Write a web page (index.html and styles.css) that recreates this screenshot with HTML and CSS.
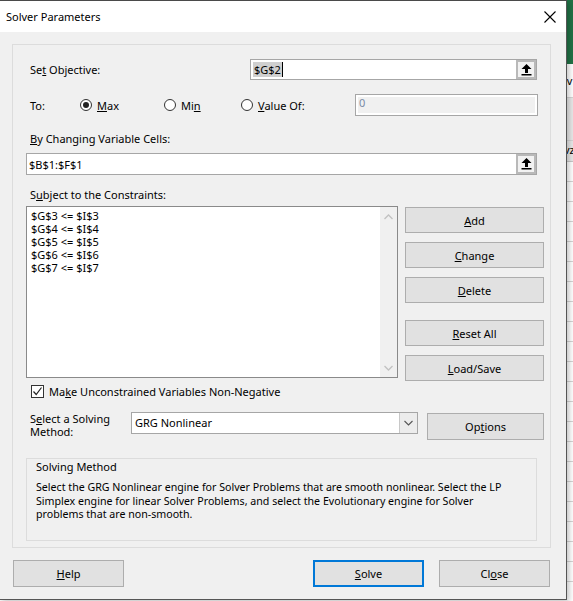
FILE: index.html
```html
<!DOCTYPE html>
<html lang="en">
<head>
    <meta charset="UTF-8">
    <title>Solver Parameters</title>
    <link rel="stylesheet" href="styles.css">
</head>
<body>
    <div class="screen">
        <div class="window">
            <div class="titlebar">
                <span class="title">Solver Parameters</span>
                <svg class="close" width="12" height="12" viewBox="0 0 12 12">
                    <path d="M0.5 0.5 L11.5 11.5 M11.5 0.5 L0.5 11.5" stroke="#000" stroke-width="1.1" fill="none"/>
                </svg>
            </div>
            <div class="client">
                <div class="panel">
                    <div class="row row-objective">
                        <span class="lbl lbl-objective">Se<u>t</u> Objective:</span>
                        <div class="refedit ref-objective">
                            <span class="ref-text"><span class="sel">$G$2</span><span class="caret"></span></span>
                            <span class="ref-btn">
                                <svg width="11" height="12" viewBox="0 0 11 12"><path d="M5.5 0 L10.5 5 L7 5 L7 9 L4 9 L4 5 L0.5 5 Z M0.5 10 H10.5 V11.5 H0.5 Z" fill="#000"/></svg>
                            </span>
                        </div>
                    </div>
                    <div class="row row-to">
                        <span class="lbl lbl-to">To:</span>
                        <label class="radio r-max"><span class="dot checked"></span><span><u>M</u>ax</span></label>
                        <label class="radio r-min"><span class="dot"></span><span>Mi<u>n</u></span></label>
                        <label class="radio r-value"><span class="dot"></span><span><u>V</u>alue Of:</span></label>
                        <div class="value-box"><span>0</span></div>
                    </div>
                    <div class="lbl lbl-block lbl-vars"><u>B</u>y Changing Variable Cells:</div>
                    <div class="refedit ref-vars">
                        <span class="ref-text">$B$1:$F$1</span>
                        <span class="ref-btn">
                            <svg width="11" height="12" viewBox="0 0 11 12"><path d="M5.5 0 L10.5 5 L7 5 L7 9 L4 9 L4 5 L0.5 5 Z M0.5 10 H10.5 V11.5 H0.5 Z" fill="#000"/></svg>
                        </span>
                    </div>
                    <div class="lbl lbl-block lbl-subject">S<u>u</u>bject to the Constraints:</div>
                    <div class="constraints">
                        <div class="listbox">
                            <ul class="items">
                                <li>$G$3 &lt;= $I$3</li>
                                <li>$G$4 &lt;= $I$4</li>
                                <li>$G$5 &lt;= $I$5</li>
                                <li>$G$6 &lt;= $I$6</li>
                                <li>$G$7 &lt;= $I$7</li>
                            </ul>
                            <div class="vscroll">
                                <svg width="9" height="6" viewBox="0 0 9 6"><path d="M0.5 5 L4.5 1 L8.5 5" stroke="#c2c2c2" stroke-width="1.3" fill="none"/></svg>
                                <svg width="9" height="6" viewBox="0 0 9 6"><path d="M0.5 1 L4.5 5 L8.5 1" stroke="#c2c2c2" stroke-width="1.3" fill="none"/></svg>
                            </div>
                        </div>
                        <div class="side-buttons">
                            <button class="btn"><u>A</u>dd</button>
                            <button class="btn"><u>C</u>hange</button>
                            <button class="btn"><u>D</u>elete</button>
                            <button class="btn btn-reset"><u>R</u>eset All</button>
                            <button class="btn"><u>L</u>oad/Save</button>
                        </div>
                    </div>
                    <label class="check-row">
                        <span class="checkbox">
                            <svg width="11" height="11" viewBox="0 0 11 11"><path d="M1.5 5.5 L4.2 8.5 L9.5 1.5" stroke="#222" stroke-width="1.2" fill="none"/></svg>
                        </span>
                        <span>Ma<u>k</u>e Unconstrained Variables Non-Negative</span>
                    </label>
                    <div class="method-row">
                        <div class="lbl method-lbl">S<u>e</u>lect a Solving<br>Method:</div>
                        <div class="combo">
                            <span class="combo-text">GRG Nonlinear</span>
                            <span class="combo-arrow">
                                <svg width="9" height="6" viewBox="0 0 9 6"><path d="M0.5 1 L4.5 5 L8.5 1" stroke="#555" stroke-width="1.1" fill="none"/></svg>
                            </span>
                        </div>
                        <button class="btn btn-options">Op<u>t</u>ions</button>
                    </div>
                    <div class="method-box">
                        <div class="method-title">Solving Method</div>
                        <p class="method-desc">Select the GRG Nonlinear engine for Solver Problems that are smooth nonlinear. Select the LP Simplex engine for linear Solver Problems, and select the Evolutionary engine for Solver problems that are non-smooth.</p>
                    </div>
                </div>
                <div class="footer">
                    <button class="btn btn-foot"><u>H</u>elp</button>
                    <span class="spacer"></span>
                    <button class="btn btn-foot btn-default"><u>S</u>olve</button>
                    <button class="btn btn-foot btn-close">Cl<u>o</u>se</button>
                </div>
            </div>
        </div>
        <div class="sheet">
            <div class="ribbon"></div>
            <div class="cell cell-lv">lv</div>
            <div class="cell cell-gray"></div>
            <div class="cell cell-vz">vz</div>
            <div class="grid"></div>
        </div>
    </div>
</body>
</html>
```

FILE: styles.css
```css
body {
    margin: 0;
    font-family: "Noto Sans", "Open Sans", sans-serif;
    font-size: 11px;
    color: #000;
    background: #fff;
    overflow: hidden;
}
u {
    text-decoration: underline;
    text-underline-offset: 1px;
}
.screen {
    display: flex;
    width: 573px;
    height: 601px;
}
.window {
    width: 566px;
    height: 598px;
    flex: none;
    border-top: 1px solid #4a4a4a;
    border-right: 1px solid #555;
    border-bottom: 1px solid #555;
    background: #f0f0f0;
    display: flex;
    flex-direction: column;
    box-shadow: 2px 2px 6px rgba(0,0,0,0.25);
    position: relative;
    z-index: 1;
}
.titlebar {
    height: 31px;
    background: #fff;
    display: flex;
    align-items: center;
    justify-content: space-between;
    padding: 0 10px 0 6px;
    flex: none;
}
.title {
    font-size: 11px;
}
.client {
    flex: 1;
    display: flex;
    flex-direction: column;
}
.panel {
    margin: 12px 0 0 12px;
    width: 539px;
    height: 504px;
    box-sizing: border-box;
    border: 1px solid #dcdcdc;
    display: flex;
    flex-direction: column;
}
.row {
    display: flex;
    align-items: center;
}
.lbl {
    white-space: nowrap;
}
.row-objective {
    margin-top: 14px;
    height: 21px;
}
.lbl-objective {
    width: 237px;
    padding-left: 17px;
    box-sizing: border-box;
}
.refedit {
    display: flex;
    align-items: stretch;
    background: #fff;
    border: 1px solid #a6a6a6;
    box-sizing: border-box;
}
.ref-objective {
    width: 287px;
    height: 21px;
}
.ref-text {
    flex: 1;
    display: flex;
    align-items: center;
    padding-left: 2px;
    font-size: 11px;
}
.sel {
    background: #cfcfcf;
    padding: 0 1px;
    line-height: 15px;
}
.caret {
    width: 1px;
    height: 15px;
    background: #000;
}
.ref-btn {
    width: 20px;
    flex: none;
    box-sizing: border-box;
    border: 2px solid #b9b9b9;
    background: #f2f2f2;
    display: flex;
    align-items: center;
    justify-content: center;
}
.row-to {
    margin-top: 14px;
    height: 22px;
}
.lbl-to {
    width: 67px;
    padding-left: 17px;
    box-sizing: border-box;
}
.radio {
    display: flex;
    align-items: center;
    gap: 5px;
}
.r-max { width: 84px; }
.r-min { width: 77px; }
.r-value { width: 114px; }
.dot {
    width: 12px;
    height: 12px;
    box-sizing: border-box;
    border: 1px solid #333;
    border-radius: 50%;
    background: #fff;
    display: flex;
    align-items: center;
    justify-content: center;
}
.dot.checked::after {
    content: '';
    width: 6px;
    height: 6px;
    border-radius: 50%;
    background: #222;
}
.value-box {
    width: 183px;
    height: 22px;
    box-sizing: border-box;
    border: 1px solid #a6a6a6;
    background: #fff;
    padding: 2px;
    display: flex;
}
.value-box span {
    flex: 1;
    background: #f0f0f0;
    color: #7a8ba6;
    font-size: 11px;
    padding-left: 1px;
    line-height: 12px;
}
.lbl-block {
    padding-left: 17px;
    height: 16px;
    line-height: 16px;
}
.lbl-vars {
    margin-top: 15px;
}
.ref-vars {
    margin: 6px 0 0 13px;
    width: 511px;
    height: 22px;
}
.lbl-subject {
    margin-top: 12px;
}
.constraints {
    display: flex;
    align-items: flex-start;
    margin: 3px 0 0 13px;
    gap: 7px;
}
.listbox {
    width: 372px;
    height: 172px;
    box-sizing: border-box;
    border: 1px solid #8a8a8a;
    background: #fff;
    display: flex;
}
.items {
    flex: 1;
    list-style: none;
    margin: 0;
    padding: 2px 0 0 4px;
    font-size: 11px;
    line-height: 13px;
}
.vscroll {
    width: 17px;
    background: #f0f0f0;
    display: flex;
    flex-direction: column;
    justify-content: space-between;
    align-items: center;
    padding: 7px 0 6px;
    box-sizing: border-box;
}
.side-buttons {
    display: flex;
    flex-direction: column;
    gap: 9px;
    width: 139px;
    margin-top: 1px;
}
.btn {
    font-family: inherit;
    font-size: 11px;
    color: #000;
    background: #e1e1e1;
    border: 1px solid #adadad;
    height: 26px;
    padding: 0;
    box-sizing: border-box;
}
.btn-reset {
    margin-top: 8px;
}
.check-row {
    display: flex;
    align-items: center;
    gap: 5px;
    margin: 4px 0 0 18px;
    height: 13px;
}
.checkbox {
    width: 13px;
    height: 13px;
    box-sizing: border-box;
    border: 1px solid #333;
    background: #fff;
    display: flex;
    align-items: center;
    justify-content: center;
}
.method-row {
    display: flex;
    align-items: flex-start;
    margin-top: 14px;
    height: 28px;
}
.method-lbl {
    width: 118px;
    padding-left: 17px;
    box-sizing: border-box;
    line-height: 13px;
}
.combo {
    width: 287px;
    height: 22px;
    box-sizing: border-box;
    border: 1px solid #a6a6a6;
    background: #fff;
    display: flex;
}
.combo-text {
    flex: 1;
    padding-left: 3px;
    line-height: 20px;
}
.combo-arrow {
    width: 17px;
    border-left: 1px solid #c8c8c8;
    background: #ececec;
    display: flex;
    align-items: center;
    justify-content: center;
}
.btn-options {
    width: 117px;
    height: 27px;
    margin: 1px 0 0 9px;
}
.method-box {
    margin: 18px 0 0 13px;
    width: 511px;
    height: 83px;
    box-sizing: border-box;
    border: 1px solid #dcdcdc;
    padding: 0 16px 0 9px;
}
.method-title {
    line-height: 16px;
}
.method-desc {
    margin: 6px 0 0;
    font-size: 10.65px;
    line-height: 13.5px;
}
.footer {
    display: flex;
    margin: 12px 0 0 13px;
    width: 537px;
}
.spacer {
    flex: 1;
}
.btn-foot {
    width: 111px;
    height: 27px;
}
.btn-default {
    border: 2px solid #0078d7;
}
.btn-close {
    margin-left: 15px;
}
.sheet {
    flex: 1;
    display: flex;
    flex-direction: column;
    overflow: hidden;
    background: #fff;
}
.ribbon {
    height: 64px;
    background: #217346;
}
.cell {
    font-size: 11px;
    white-space: nowrap;
    margin-left: -3px;
}
.cell-lv {
    height: 33px;
    line-height: 33px;
}
.cell-gray {
    height: 42px;
    background: #e8e8e8;
    border-top: 1px solid #d4d4d4;
    border-bottom: 1px solid #d4d4d4;
}
.cell-vz {
    height: 20px;
    line-height: 18px;
    background: #e8e8e8;
    border-bottom: 1px solid #c8c8c8;
}
.grid {
    flex: 1;
    background: repeating-linear-gradient(#fff 0 19px, #d4d4d4 19px 20px);
}
```
